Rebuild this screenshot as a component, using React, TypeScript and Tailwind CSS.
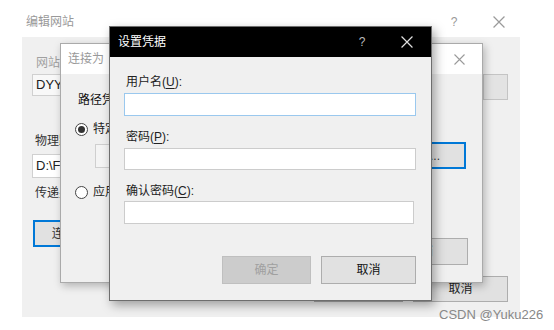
import React from 'react'

const Close = ({ color, size = 11 }: { color: string; size?: number }) => (
  <svg width={size} height={size} viewBox="0 0 11 11" className="block">
    <path d="M0.5 0.5L10.5 10.5M10.5 0.5L0.5 10.5" stroke={color} strokeWidth="1.1" fill="none" />
  </svg>
)

const Radio = ({ checked }: { checked?: boolean }) => (
  <div className="w-[13px] h-[13px] rounded-full border border-[#444] bg-white flex items-center justify-center shrink-0">
    {checked && <div className="w-[7px] h-[7px] rounded-full bg-[#333]"></div>}
  </div>
)

const Key = ({ k }: { k: string }) => <span className="underline underline-offset-2">{k}</span>

const App = () => {
  return (
    <div className="relative w-[554px] h-[330px] overflow-hidden bg-white text-[12px] text-[#222] font-['Liberation_Sans','Noto_Sans_CJK_SC',sans-serif]">
      {/* 编辑网站 (back window) */}
      <div className="flex items-start h-[37px] pt-[14px] leading-[16px] text-[#999]">
        <span className="ml-[26px] flex-1">编辑网站</span>
        <span className="w-[10px] text-center mr-[34px]">?</span>
        <span className="mt-[2px] mr-[49px]">
          <Close color="#9a9a9a" size={12} />
        </span>
      </div>
      <div className="ml-[22px] w-[498px] h-[280px] bg-[#f0f0f0] flex flex-col pl-[10px] pr-[12px]">
        <div className="mt-[18px] ml-[4px] leading-[16px] text-[#a0a0a0]">网站名称(S):</div>
        <div className="mt-[3px] flex items-start">
          <div className="w-[300px] h-[22px] border border-[#d0d0d0] bg-[#f8f8f8] px-[3px] leading-[20px] text-[13px] text-[#222]">
            DYYSFTP
          </div>
          <div className="ml-auto w-[25px] h-[26px] border border-[#c4c4c4] bg-[#e3e3e3]"></div>
        </div>
        <div className="mt-[33px] ml-[3px] leading-[16px] text-[#333]">物理路径(P):</div>
        <div className="mt-[5px] w-[380px] h-[24px] border border-[#d0d0d0] bg-white px-[3px] leading-[22px] text-[13px]">
          D:\FTP
        </div>
        <div className="mt-[7px] ml-[3px] leading-[16px] text-[#333]">传递身份验证</div>
        <div className="mt-[19px] ml-[1px] w-[100px] h-[27px] border-2 border-[#0078d7] bg-[#e1e1e1] flex items-center justify-center text-[#333]">
          连接为(C)...
        </div>
        <div className="mt-[29px] flex justify-end gap-[10px]">
          <div className="w-[89px] h-[26px] border border-[#adadad] bg-[#e1e1e1] flex items-center justify-center">确定</div>
          <div className="w-[95px] h-[26px] border border-[#adadad] bg-[#e1e1e1] flex items-center justify-center">取消</div>
        </div>
      </div>

      {/* 连接为 (middle window) */}
      <div className="absolute left-[60px] top-[43px] w-[423px] h-[240px] border border-[#aaaaaa] bg-[#f0f0f0] shadow-[2px_3px_8px_rgba(0,0,0,0.25)] flex flex-col">
        <div className="h-[30px] bg-white flex items-center shrink-0">
          <span className="ml-[7px] flex-1 text-[#999]">连接为</span>
          <span className="mr-[17px]">
            <Close color="#9a9a9a" />
          </span>
        </div>
        <div className="flex-1 flex flex-col pl-[14px] pr-[16px] pb-[17px]">
          <div className="mt-[18px] ml-[3px] leading-[16px] text-[#111]">路径凭据:</div>
          <div className="mt-[14px] flex items-center h-[14px]">
            <Radio checked />
            <span className="ml-[5px] leading-[16px]">特定用户:</span>
          </div>
          <div className="mt-[6px] flex items-center pl-[20px]">
            <div className="flex-1 h-[24px] border border-[#cfcfcf] bg-[#f4f4f4]"></div>
            <div className="ml-[6px] w-[102px] h-[27px] border-2 border-[#0078d7] bg-[#e1e1e1] flex items-center justify-center text-[#333]">
              设置(E)...
            </div>
          </div>
          <div className="mt-[16px] flex items-center h-[14px]">
            <Radio />
            <span className="ml-[5px] leading-[16px]">应用程序用户(通过身份验证)(A)</span>
          </div>
          <div className="mt-auto flex justify-end gap-[10px]">
            <div className="w-[89px] h-[27px] border border-[#adadad] bg-[#e1e1e1] flex items-center justify-center">确定</div>
            <div className="w-[94px] h-[27px] border border-[#adadad] bg-[#e1e1e1] mr-[-2px] flex items-center justify-center">取消</div>
          </div>
        </div>
      </div>

      {/* 设置凭据 (front window) */}
      <div className="absolute left-[109px] top-[26px] w-[323px] h-[275px] border border-[#6e6e6e] bg-[#f0f0f0] shadow-[3px_4px_10px_rgba(0,0,0,0.35)] flex flex-col">
        <div className="h-[30px] bg-black flex items-center shrink-0 text-white">
          <span className="ml-[8px] flex-1 leading-[16px]">设置凭据</span>
          <span className="w-[10px] text-center text-[#bbb] mr-[34px]">?</span>
          <span className="mr-[18px]">
            <Close color="#e0e0e0" size={12} />
          </span>
        </div>
        <div className="flex-1 flex flex-col pl-[14px] pt-[17px]">
          <div className="ml-[2px] h-[16px] leading-[16px] text-[#222]">
            用户名(<Key k="U" />):
          </div>
          <div className="mt-[3px] w-[292px] h-[23px] border border-[#9ac8ee] bg-white"></div>
          <div className="mt-[13px] ml-[2px] h-[16px] leading-[16px] text-[#222]">
            密码(<Key k="P" />):
          </div>
          <div className="mt-[3px] w-[292px] h-[22px] border border-[#cccccc] bg-white"></div>
          <div className="mt-[13px] ml-[2px] h-[16px] leading-[16px] text-[#222]">
            确认密码(<Key k="C" />):
          </div>
          <div className="mt-[2px] w-[290px] h-[23px] border border-[#cccccc] bg-white"></div>
          <div className="mt-[32px] w-[292px] flex justify-end gap-[10px]">
            <div className="w-[89px] h-[28px] border border-[#bfbfbf] bg-[#cccccc] text-[#a0a0a0] flex items-center justify-center">
              确定
            </div>
            <div className="w-[95px] h-[28px] border border-[#adadad] bg-[#e1e1e1] text-[#111] flex items-center justify-center">
              取消
            </div>
          </div>
        </div>
      </div>

      {/* watermark */}
      <div className="absolute left-[439px] top-[306px] text-[13px] leading-[18px] text-[#888] font-['Liberation_Sans',sans-serif]">
        CSDN @Yuku226
      </div>
    </div>
  )
}

export default App
